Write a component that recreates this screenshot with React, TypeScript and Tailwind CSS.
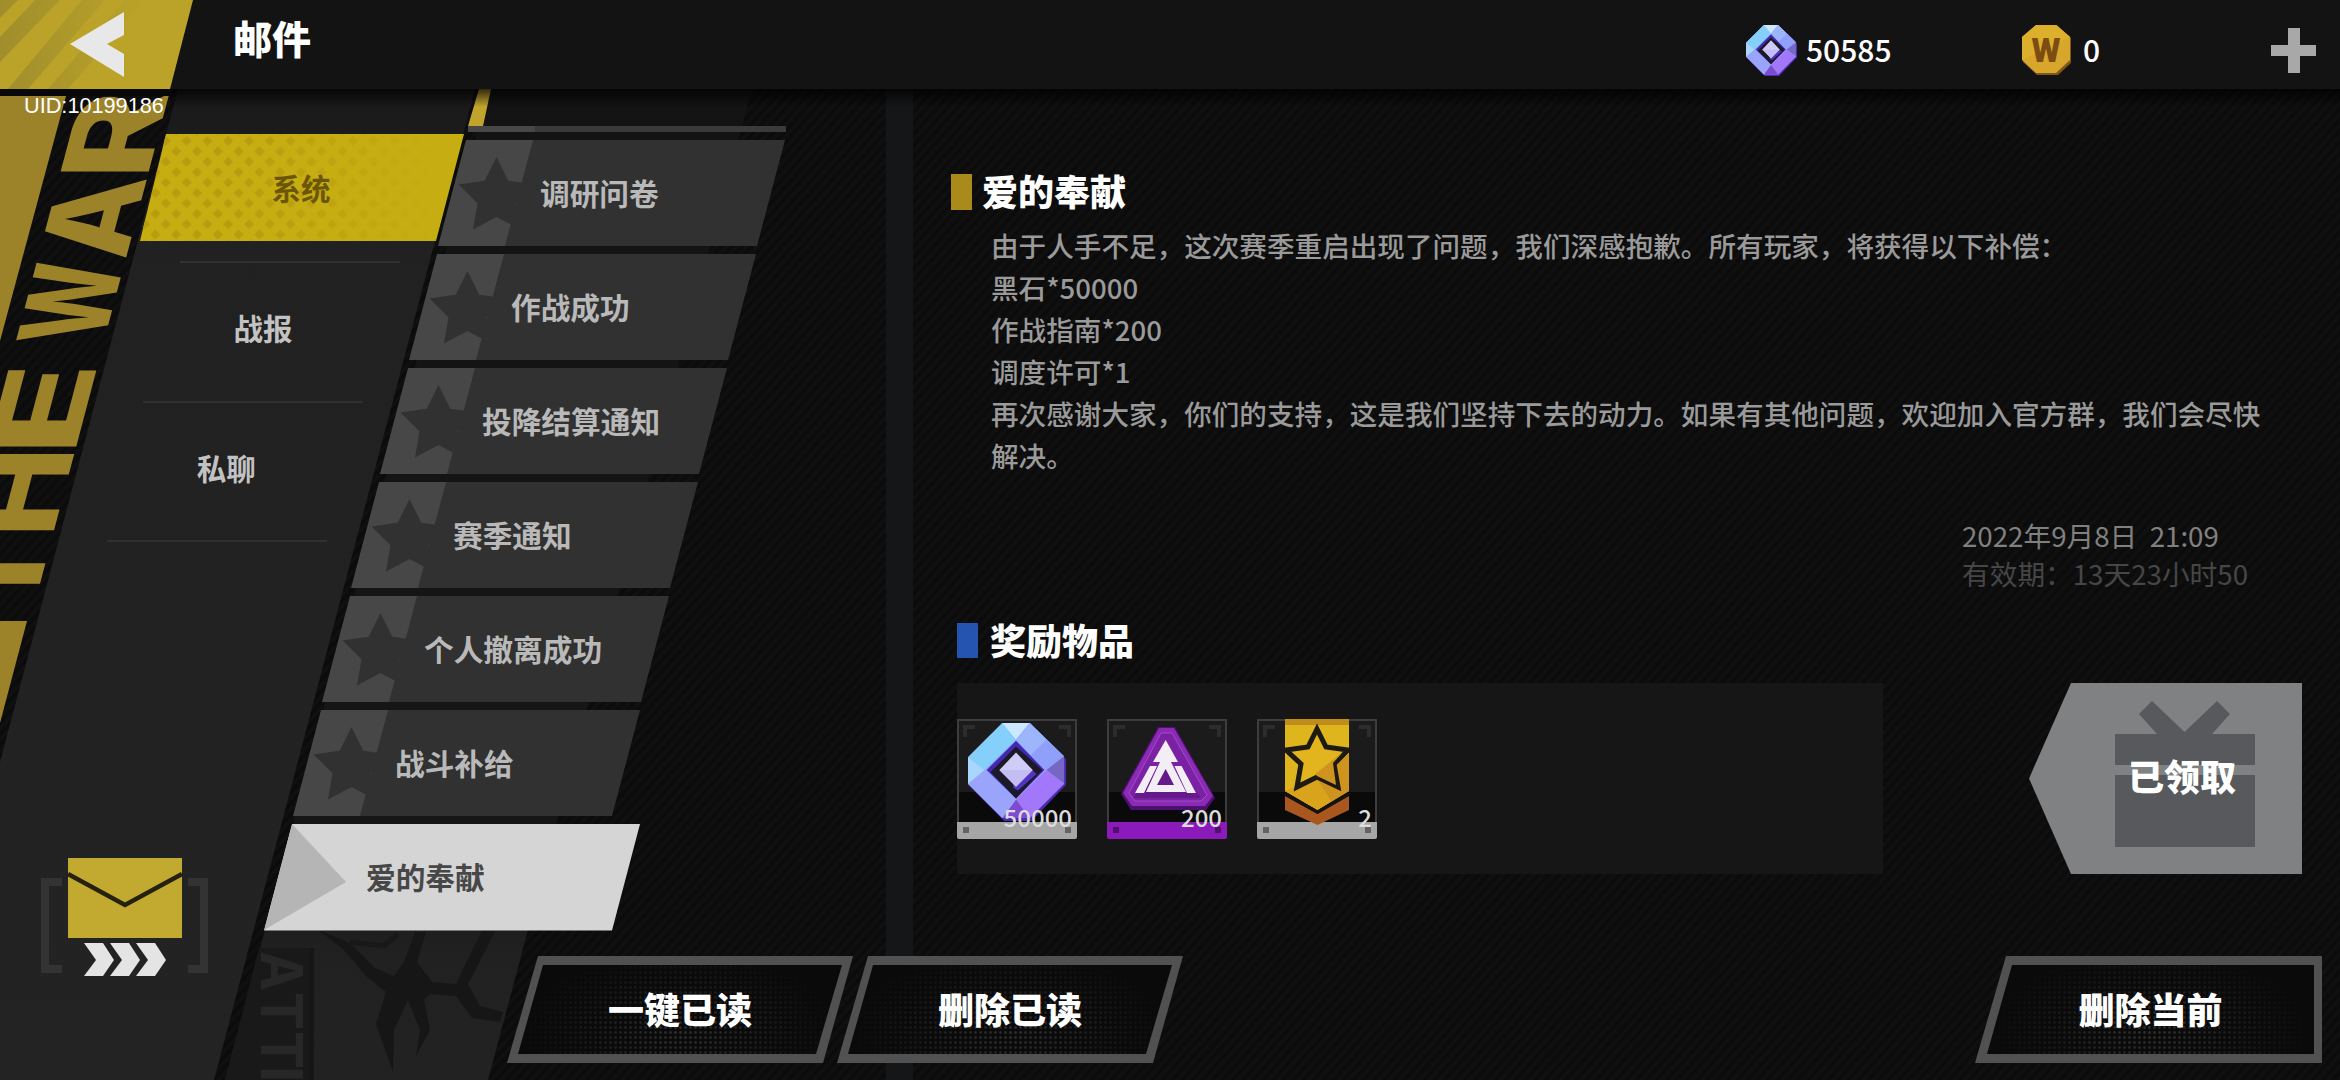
import { useState } from 'react';

const TABS = ['系统', '战报', '私聊'];

const MAILS = ['调研问卷', '作战成功', '投降结算通知', '赛季通知', '个人撤离成功', '战斗补给', '爱的奉献'];

const BODY = [
  '由于人手不足，这次赛季重启出现了问题，我们深感抱歉。所有玩家，将获得以下补偿：',
  '黑石*50000',
  '作战指南*200',
  '调度许可*1',
  '再次感谢大家，你们的支持，这是我们坚持下去的动力。如果有其他问题，欢迎加入官方群，我们会尽快解决。',
];

// letters of the slanted banner, with their distance from the bottom edge
const BANNER = [
  { ch: 'T', u: 466, w: 81 },
  { ch: 'H', u: 543, w: 90 },
  { ch: 'E', u: 625, w: 92 },
  { ch: 'W', u: 738, w: 81 },
  { ch: 'A', u: 820, w: 83 },
  { ch: 'R', u: 901, w: 88 },
];

function Backdrop() {
  return (
    <svg className="absolute inset-0" width="2340" height="1080" viewBox="0 0 2340 1080">
      <defs>
        <linearGradient id="groove" x1="0" y1="0" x2="1" y2="0">
          <stop offset="0" stopColor="#111" />
          <stop offset="0.5" stopColor="#0a0a0a" />
          <stop offset="1" stopColor="#111" />
        </linearGradient>
        <pattern id="stripes" width="7.5" height="7.5" patternUnits="userSpaceOnUse" patternTransform="rotate(42)">
          <rect width="7.5" height="7.5" fill="url(#groove)" />
        </pattern>
        <linearGradient id="strip" x1="0" y1="0" x2="0" y2="1">
          <stop offset="0" stopColor="#131313" />
          <stop offset="0.75" stopColor="#161616" />
          <stop offset="0.88" stopColor="#212121" />
          <stop offset="1" stopColor="#222" />
        </linearGradient>
        <linearGradient id="panel" x1="0" y1="0" x2="0" y2="1">
          <stop offset="0" stopColor="#191919" />
          <stop offset="0.16" stopColor="#212121" />
          <stop offset="1" stopColor="#232323" />
        </linearGradient>
        <linearGradient id="shade" x1="0" y1="0" x2="0" y2="1">
          <stop offset="0" stopColor="#000" stopOpacity="0.75" />
          <stop offset="1" stopColor="#000" stopOpacity="0" />
        </linearGradient>
      </defs>
      <rect width="2340" height="1080" fill="url(#stripes)" />
      <rect x="886" y="89" width="27" height="991" fill="#151618" />

      {/* cracked strip behind the mail list */}
      <path d="M489 89H752L488 1080H225Z" fill="url(#strip)" />
      <path d="M259 948H314V1080H225Z" fill="#191919" />
      <path d="M312 948V1080" stroke="#161616" strokeWidth="4" />
      <g transform="translate(261 952) rotate(90)" fill="#272727" fontFamily="Inter, sans-serif" fontWeight="700" fontSize="58">
        <text x="-1" y="0" textLength="40" lengthAdjust="spacingAndGlyphs">A</text>
        <text x="40" y="0" textLength="38" lengthAdjust="spacingAndGlyphs">T</text>
        <text x="79" y="0" textLength="38" lengthAdjust="spacingAndGlyphs">T</text>
        <text x="114" y="0">I</text>
      </g>
      <path
        fill="#161616"
        d="M318 930L350 943L375 968L394 976L404 962L415 932H426L417 962L432 982L456 984L482 930H496L468 984L480 1006L503 1012L500 1022L472 1018L456 996L430 994L424 1000L430 1030L416 1056L420 1030L408 1000L394 1030L393 1072L376 1024L386 992L366 976L344 950Z"
      />
      <path d="M350 942L384 946L398 934" fill="none" stroke="#181818" strokeWidth="5" />

      {/* banner on the left edge */}
      <path d="M0 96H66L0 341Z" fill="#9c8329" />
      <path d="M0 621H27L0 723Z" fill="#9c8329" />
      <g transform="matrix(0.264 -1 1 0 -91 1080)" fill="#9c8329" fontFamily="Inter, sans-serif" fontWeight="800" fontSize="121">
        {BANNER.map((l) => (
          <text key={l.ch} x={l.u} y="0" textLength={l.w} lengthAdjust="spacingAndGlyphs">{l.ch}</text>
        ))}
      </g>

      <path d="M178 89H475L214 1080H-84Z" fill="url(#panel)" />
      <path d="M479 89H491L483 126H468Z" fill="#c2a42d" />
      <rect x="171" y="89" width="2169" height="18" fill="url(#shade)" />
      <rect y="89" width="171" height="7" fill="#080808" />
    </svg>
  );
}

function Gem({ className }: { className: string }) {
  return (
    <svg className={className} viewBox="0 0 100 100">
      <path d="M35 0H63L100 37V63L65 100H37L0 63V36Z" fill="#4c2bb0" />
      <path d="M35 0H63L98 34V62L63 97H35L0 62V35Z" fill="#93a5fb" />
      <path d="M35 0L49 17L17 48L0 35Z" fill="#84d0fb" />
      <path d="M35 0H63L49 17Z" fill="#cbe8fe" />
      <path d="M63 0L98 34L80 48L49 17Z" fill="#8f9ffa" />
      <path d="M63 0L80 17L64 33L49 17Z" fill="#9db5fb" />
      <path d="M98 34V62L80 48Z" fill="#7468c4" />
      <path d="M98 62L63 97L49 78L80 48Z" fill="#a277fa" />
      <path d="M63 97H35L49 78Z" fill="#7e4bd0" />
      <path d="M35 97L0 62L17 48L49 78Z" fill="#9aa4fb" />
      <path d="M0 35L17 48L0 62Z" fill="#a9d6fd" />
      <path d="M49 18L78 48L49 77L19 48Z" fill="#4428b4" />
      <path d="M49 24L76 48L49 77L23 50Z" fill="#1c1a26" />
      <path d="M50 34L70 52L51 69L46 66Z" fill="#5234c0" />
      <path d="M49 30L66 48L49 65L32 48Z" fill="#d0ccf8" />
      <path d="M66 48L49 65L32 48Z" fill="#c4bdf4" />
    </svg>
  );
}

function Coin() {
  return (
    <svg className="h-[50px] w-[50px]" viewBox="0 0 50 50">
      <path d="M15 0H35L49 13V38L36 50H15L1 37V12Z" fill="#80571a" />
      <path d="M14 0H34L48 12V35L34 48H14L0 35V12Z" fill="#d7a62a" />
      <path d="M14 0H34L48 12L0 35V12Z" fill="#dcb02d" />
      <text x="24" y="37" textAnchor="middle" textLength="29" lengthAdjust="spacingAndGlyphs" fontFamily="Roboto, sans-serif" fontWeight="900" fontSize="34" fill="#7c4c12">
        W
      </text>
    </svg>
  );
}

function GuideIcon() {
  return (
    <svg className="absolute inset-0" width="120" height="120" viewBox="0 0 120 120">
      <path d="M51 8H68L108 79L99 91H24L14 75Z" fill="#4c1070" />
      <path d="M52 9H67L106 77L98 87H25L16 74Z" fill="#8b2bb5" />
      <path d="M54 14H65L100 76L94 82H28L22 74Z" fill="#7a22a3" stroke="#a04cc6" strokeWidth="1" />
      <path d="M26 79L40 60H80L94 79Z" fill="#641a88" />
      <path d="M58.700 21L71 43H64L79 73H39L53 43H46Z" fill="#f3eef6" />
      <path d="M58.700 50L67 66H50Z" fill="#641a88" />
      <path d="M43 47H50L37 74H28ZM67.500 47H74.500L89 74H80Z" fill="#f3eef6" />
    </svg>
  );
}

function MedalIcon() {
  return (
    <svg className="absolute inset-0" width="120" height="120" viewBox="0 0 120 120">
      <path d="M28 0H92V72L60.500 91L28 72Z" fill="#dfb51d" />
      <path d="M28 0H92V6H28Z" fill="#c08c1c" />
      <path d="M92 35V72L60.500 91L28 72L60 60Z" fill="#cf9420" />
      <path d="M28 72L60 60L74 82L60.500 91Z" fill="#d9a41c" />
      <path d="M28 77L60.500 95L92 77V91L60.500 106L28 91Z" fill="#a9561f" />
      <path d="M28 75L60.500 93L92 75" fill="none" stroke="#15130f" strokeWidth="3" />
      <path
        d="M60 10L69 28L91 31L77 45L81 68L60 58L40 68L44 45L29 31L51 28Z"
        fill="#e2b41e"
        stroke="#1d1a14"
        strokeWidth="5"
      />
      <path d="M86 33L76 44L79 66L60 57L58 55Z" fill="#cf9420" />
    </svg>
  );
}

const REWARDS = [
  { id: 'stone', count: 50000, bar: 'bg-[#a6a6a6]', icon: <Gem className="absolute left-[11px] top-1 h-[98px] w-[98px]" /> },
  { id: 'guide', count: 200, bar: 'bg-[#8a1bba]', icon: <GuideIcon /> },
  { id: 'permit', count: 2, bar: 'bg-[#a6a6a6]', icon: <MedalIcon /> },
];

function Reward({ count, bar, icon }: { count: number; bar: string; icon: React.ReactNode }) {
  return (
    <div className="relative flex h-[120px] w-[120px] flex-col">
      <div className="h-[73px] border-2 border-b-0 border-[#3d3d3d] bg-[#1b1b1b] p-1">
        <div className="flex justify-between">
          <div className="h-3 w-3 border-l-4 border-t-4 border-[#2c2c2c]" />
          <div className="h-3 w-3 border-r-4 border-t-4 border-[#2c2c2c]" />
        </div>
      </div>
      <div className="h-[30px] border-x-2 border-[#3d3d3d] bg-[#0a0a0a]" />
      <div className={`flex h-[17px] items-center justify-between rounded-b-xs px-1.5 ${bar}`}>
        <div className="h-1.5 w-1.5 bg-black/40" />
        <div className="h-1.5 w-1.5 bg-black/40" />
      </div>
      {icon}
      <span className="absolute right-[5px] top-[86px] text-2xl leading-6 font-medium text-[#dcdcdc]">{count}</span>
    </div>
  );
}

function ActionButton({ label, flat = false }: { label: string; flat?: boolean }) {
  return (
    <button
      className={
        flat
          ? 'h-[107px] w-[347px] bg-[#515151] py-[9px] pl-3 pr-2 [clip-path:polygon(31px_0,100%_0,100%_100%,0_100%)]'
          : 'h-[107px] w-[346px] bg-[#515151] px-[11px] py-[9px] [clip-path:polygon(31px_0,100%_0,calc(100%-30px)_100%,0_100%)]'
      }
    >
      <span
        className={
          flat
            ? 'relative flex h-full items-center justify-center bg-[#0a0a0a] [clip-path:polygon(25px_0,100%_0,100%_100%,0_100%)]'
            : 'relative flex h-full items-center justify-center bg-[#0a0a0a] [clip-path:polygon(25px_0,100%_0,calc(100%-26px)_100%,0_100%)]'
        }
      >
        <span className="absolute inset-0 bg-[radial-gradient(circle,#2c2c2c_1px,transparent_1.8px)] bg-[size:5px_5px] [mask-image:radial-gradient(ellipse_50%_95%_at_50%_75%,black,transparent)]" />
        <span className="relative -top-0.5 text-4xl leading-none font-black text-white">{label}</span>
      </span>
    </button>
  );
}

function Header() {
  return (
    <header className="relative flex h-[89px] shrink-0 bg-[#131313]">
      <button className="h-[89px] w-[193px]">
        <svg width="193" height="89" viewBox="0 0 193 89">
          <defs>
            <clipPath id="back">
              <path d="M0 0H193L170 89H0Z" />
            </clipPath>
            <linearGradient id="fade" x1="0" y1="0" x2="1" y2="0">
              <stop offset="0" stopColor="#a08e2c" />
              <stop offset="1" stopColor="#a08e2c" stopOpacity="0" />
            </linearGradient>
          </defs>
          <g clipPath="url(#back)">
            <rect width="193" height="89" fill="#bba329" />
            <path d="M0 0H18L0 18ZM35 0H60L0 62V37ZM82 0H105L28 89H8ZM125 0H145L68 89H48Z" fill="url(#fade)" />
          </g>
          <path d="M70 44L124 12V35L107 44L124 54V77Z" fill="#e8e8e8" />
        </svg>
      </button>
      <h1 className="pl-[40px] pt-[18px] text-[39px] leading-none font-black text-white">邮件</h1>
      <div className="ml-auto flex items-center pt-[11px] text-[30px] leading-none font-medium text-white">
        <div className="flex w-[276px] items-center gap-[9px]">
          <Gem className="h-[51px] w-[51px]" />
          <span className="-mt-0.5">50585</span>
        </div>
        <div className="flex w-[249px] items-center gap-[11px]">
          <Coin />
          <span className="-mt-0.5">0</span>
        </div>
        <svg className="mr-6" width="45" height="45" viewBox="0 0 45 45">
          <path d="M17 0H29V17H45V28H29V45H17V28H0V17H17Z" fill="#a8a8a8" />
        </svg>
      </div>
      <span className="absolute left-[24px] top-[96px] font-['Liberation_Sans',sans-serif] text-[21.700px] leading-5 text-white">
        UID:10199186
      </span>
    </header>
  );
}

function Sidebar() {
  const [active, setActive] = useState(0);

  return (
    <aside className="flex w-[264px] shrink-0 flex-col pt-[45px]">
      {TABS.map((tab, i) => (
        <div key={tab} style={{ marginLeft: 140 - i * 36.6 }} className="w-[324px]">
          <button
            onClick={() => setActive(i)}
            className={
              i === active
                ? 'relative flex h-[107px] w-full items-center justify-center bg-[#c6ad12] pr-0.5 text-[29.5px] leading-none font-bold text-[#6b5608] [clip-path:polygon(26px_0,100%_0,calc(100%-28px)_100%,0_100%)]'
                : 'flex h-[107px] w-full items-center justify-center pr-[5px] pt-0.5 text-[29.5px] leading-none font-bold text-[#c2c2c2]'
            }
          >
            {i === active && (
              <svg className="absolute inset-0 [mask-image:linear-gradient(to_right,black_30%,transparent_90%)]" width="324" height="107">
                <defs>
                  <pattern id="diamonds" width="20.8" height="20.8" patternUnits="userSpaceOnUse">
                    <path d="M5 2L10 7L5 12L0 7ZM15.400 12.400L20.400 17.400L15.400 22.400L10.400 17.400ZM15.400 -8.400L20.400 -3.400L15.400 1.600L10.400 -3.400Z" fill="#b99b0f" />
                  </pattern>
                </defs>
                <rect width="324" height="107" fill="url(#diamonds)" />
              </svg>
            )}
            <span className="relative">{tab}</span>
          </button>
          <div className="mt-5 mb-[10.500px] ml-10 h-0.5 w-[220px] bg-[#303030]" />
        </div>
      ))}

      <svg className="mt-auto mb-[102px] ml-[41px]" width="168" height="120" viewBox="0 0 168 120">
        <path d="M21 24H4V111H21M147 24H163V111H147" fill="none" stroke="#333" strokeWidth="8" />
        <path d="M27 0H141V80H27Z" fill="#c2a930" />
        <path d="M27 16L84 47L141 16" fill="none" stroke="#25210f" strokeWidth="4.500" />
        <path
          d="M43 85H62L73 102L62 118H43L55 102ZM69 85H88L99 102L88 118H69L81 102ZM95 85H114L125 102L114 118H95L107 102Z"
          fill="#e4e4e4"
        />
      </svg>
    </aside>
  );
}

function MailList() {
  const [selected, setSelected] = useState(6);

  return (
    <div className="w-[687px] shrink-0 pt-[37px]">
      {/* bottom edge of the item scrolled out of view */}
      <div className="mb-2 ml-[204px] flex h-1.5 w-[318px] bg-[#3a3a3a]">
        <div className="w-[67px] bg-[#474747]" />
      </div>
      <div className="flex flex-col gap-2">
        {MAILS.map((mail, i) =>
          i === selected ? (
            <button
              key={mail}
              style={{ marginLeft: (6 - i) * 29 }}
              className="relative flex h-[106.500px] w-[376px] items-center bg-[#d5d5d5] pl-[102px] text-[29.700px] leading-none font-bold text-[#474747] [clip-path:polygon(28px_0,100%_0,calc(100%-28px)_100%,0_100%)]"
            >
              <svg className="absolute inset-0" width="90" height="107">
                <path d="M28 0L82 58L0 106Z" fill="#b5b5b5" />
              </svg>
              {mail}
            </button>
          ) : (
            <button
              key={mail}
              onClick={() => setSelected(i)}
              style={{ marginLeft: (6 - i) * 29 }}
              className="relative flex h-[106px] w-[347px] items-center bg-[#313131] pl-[102px] text-[29.700px] leading-none font-bold text-[#b9b9b9] [clip-path:polygon(28px_0,100%_0,calc(100%-28px)_100%,0_100%)]"
            >
              <svg className="absolute inset-0" width="100" height="106">
                <path d="M28 0H95L67 106H0Z" fill="#474747" />
                <path
                  d="M58.500 17L70.300 40.800L96.500 44.600L77.500 63.200L82 89.400L58.500 77L35 89.400L39.500 63.200L20.500 44.600L46.700 40.800Z"
                  fill="#313131"
                />
              </svg>
              {mail}
            </button>
          )
        )}
      </div>
    </div>
  );
}

function MailDetail() {
  return (
    <section className="flex flex-1 flex-col pt-[84px]">
      <div className="flex h-[38px] items-center gap-[10px]">
        <div className="h-9 w-[21px] bg-[#a98a1b]" />
        <h2 className="-mt-1 text-4xl leading-none font-black text-white">爱的奉献</h2>
      </div>
      <div className="mt-[13px] ml-[40px] w-[1280px] text-[27.600px] leading-[42px] font-medium text-[#9a9a9a]">
        {BODY.map((line) => (
          <p key={line}>{line}</p>
        ))}
      </div>
      <div className="mt-[40px] ml-[1011px] text-[27.700px] leading-[38px] whitespace-pre">
        <p className="text-[#808080]">2022年9月8日  21:09</p>
        <p className="text-[#464646]">有效期：13天23小时50</p>
      </div>

      <div className="mt-[30px] ml-1.5 flex h-9 items-center gap-3">
        <div className="h-[35px] w-[21px] bg-[#2553b0]" />
        <h2 className="-mt-0.5 text-4xl leading-none font-black text-white">奖励物品</h2>
      </div>
      <div className="mt-[25px] ml-1.5 flex">
        <div className="flex h-[191px] w-[926px] items-center gap-[30px] bg-[#161616]">
          {REWARDS.map((r) => (
            <Reward key={r.id} count={r.count} bar={r.bar} icon={r.icon} />
          ))}
        </div>
        <button className="relative ml-[146px] flex h-[191px] w-[273px] items-center justify-center bg-[#808183] [clip-path:polygon(42px_0,100%_0,100%_100%,42px_100%,0_50%)]">
          <svg className="absolute inset-0" width="273" height="191" viewBox="0 0 273 191">
            <path d="M86 51H128L110 31L123 18L155.500 49L188 18L201 31L183 51H226V82H86ZM86 92H226V164H86Z" fill="#58595c" />
          </svg>
          <span className="relative pl-[33px] pb-[7px] text-4xl leading-none font-black text-white">已领取</span>
        </button>
      </div>
    </section>
  );
}

export default function App() {
  return (
    <div className="relative flex h-[1080px] w-[2340px] flex-col overflow-hidden bg-[#0e0e0e] font-['Noto_Sans_CJK_SC',sans-serif]">
      <Backdrop />
      <Header />
      <div className="relative flex flex-1">
        <Sidebar />
        <div className="flex flex-1 flex-col">
          <div className="flex h-[867px]">
            <MailList />
            <MailDetail />
          </div>
          <footer className="flex pl-[243px] pr-[18px]">
            <ActionButton label="一键已读" />
            <div className="-ml-4">
              <ActionButton label="删除已读" />
            </div>
            <div className="ml-auto">
              <ActionButton label="删除当前" flat />
            </div>
          </footer>
        </div>
      </div>
    </div>
  );
}
